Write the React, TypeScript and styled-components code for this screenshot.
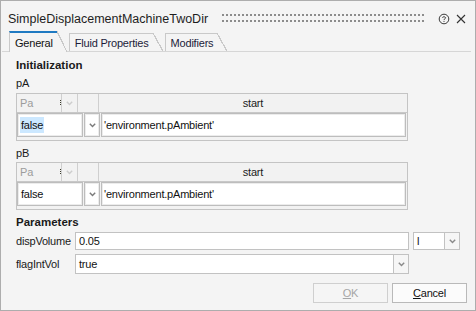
import React from 'react';
import styled, {createGlobalStyle} from 'styled-components';

const GlobalStyle = createGlobalStyle`
  html, body {
    margin: 0;
    padding: 0;
    background: #f4f4f4;
  }
  body {
    font-family: "Liberation Sans", Arial, sans-serif;
    font-size: 11px;
    letter-spacing: -0.2px;
    color: #1a1a1a;
  }
  * {
    box-sizing: border-box;
  }
`;

const Window = styled.div`
  width: 476px;
  height: 311px;
  border: 1px solid #adadad;
  background: #f4f4f4;
  display: flex;
  flex-direction: column;
  overflow: hidden;
`;

const TitleBar = styled.div`
  height: 30px;
  flex: none;
  display: flex;
  align-items: center;
  padding: 5px 8px 0 7px;
`;

const Title = styled.span`
  font-size: 12.5px;
  letter-spacing: 0;
  color: #1e1e1e;
  white-space: nowrap;
`;

const Grip = styled.svg`
  flex: 1;
  height: 9px;
  margin: 0 8px 0 14px;
`;

const IconButton = styled.span`
  width: 12px;
  height: 12px;
  display: flex;
  align-items: center;
  justify-content: center;
  margin-left: 5px;
  color: #333;
`;

const TabStrip = styled.div`
  height: 21px;
  flex: none;
  display: flex;
  align-items: flex-end;
  margin: 0 4px 0 1px;
  padding-left: 7px;
  border-bottom: 1px solid #d6d6d6;
`;

const Tab = styled.div<{$active?: boolean}>`
  position: relative;
  z-index: ${p => (p.$active ? 1 : 0)};
  height: ${p => (p.$active ? 21 : 18)}px;
  margin-bottom: ${p => (p.$active ? -1 : 0)}px;
  margin-right: 12px;
  padding: 0 4px 0 5px;
  display: flex;
  align-items: center;
  background: #f4f4f4;
  border-left: 1px solid #c9c9c9;
  border-top: ${p => (p.$active ? '2px solid #1f7ac2' : '1px solid #c9c9c9')};
  color: ${p => (p.$active ? '#111' : '#1c1c3a')};
  white-space: nowrap;

  &::after {
    content: '';
    position: absolute;
    top: ${p => (p.$active ? -2 : -1)}px;
    bottom: 0;
    right: -10px;
    width: 10px;
    background: linear-gradient(
      to top right,
      #f4f4f4 calc(50% - 0.7px),
      #c9c9c9 calc(50% - 0.7px),
      #c9c9c9 calc(50% + 0.5px),
      transparent calc(50% + 0.5px)
    );
  }
`;

const Panel = styled.div`
  flex: 1;
  display: flex;
  flex-direction: column;
  padding: 0 8px 0 15px;
`;

const SectionTitle = styled.div<{$top: number}>`
  height: 16px;
  line-height: 16px;
  margin-top: ${p => p.$top}px;
  font-weight: bold;
  font-size: 11.5px;
  letter-spacing: 0;
  color: #1a1a1a;
`;

const FieldLabel = styled.div<{$top: number}>`
  height: 16px;
  line-height: 16px;
  margin-top: ${p => p.$top}px;
`;

const Grid = styled.div<{$top: number}>`
  width: 392px;
  height: 48px;
  margin-top: ${p => p.$top}px;
  border: 1px solid #c4c4c4;
  background: #f2f2f2;
  display: flex;
  flex-direction: column;
`;

const HeaderRow = styled.div`
  height: 19px;
  display: flex;
  border-bottom: 1px solid #c8c8c8;
`;

const HeaderCell = styled.div<{$width?: number; $muted?: boolean; $center?: boolean}>`
  position: relative;
  width: ${p => (p.$width ? `${p.$width}px` : 'auto')};
  flex: ${p => (p.$width ? 'none' : 1)};
  display: flex;
  align-items: center;
  justify-content: ${p => (p.$center ? 'center' : 'flex-start')};
  padding-left: ${p => (p.$center ? 0 : 3)}px;
  border-right: 1px solid #cfcfcf;
  color: ${p => (p.$muted ? '#9c9c9c' : '#1a1a1a')};

  &:last-child {
    border-right: none;
  }
`;

const Splitter = styled.span`
  position: absolute;
  right: 0;
  top: 6px;
  width: 1px;
  height: 5px;
  border-left: 1px dotted #3a3a2a;
`;

const DataRow = styled.div`
  height: 24px;
  display: flex;
  gap: 1px;
  padding-right: 1px;
`;

const DataCell = styled.div<{$width?: number; $center?: boolean}>`
  width: ${p => (p.$width ? `${p.$width}px` : 'auto')};
  flex: ${p => (p.$width ? 'none' : 1)};
  display: flex;
  align-items: center;
  justify-content: ${p => (p.$center ? 'center' : 'flex-start')};
  padding-left: ${p => (p.$center ? 0 : 2)}px;
  background: #fff;
  border: 1px solid #bdbdbd;
  box-shadow: inset 0 0 0 1px #ececec;
  color: #111;
  white-space: nowrap;
`;

const Selected = styled.span<{$on?: boolean}>`
  background: ${p => (p.$on ? '#cce8ff' : 'transparent')};
  padding: 2px 1px;
`;

const ParamRow = styled.div<{$top: number; $height: number}>`
  height: ${p => p.$height}px;
  margin-top: ${p => p.$top}px;
  display: flex;
  align-items: stretch;
`;

const ParamLabel = styled.div`
  width: 59px;
  display: flex;
  align-items: center;
  white-space: nowrap;
`;

const TextBox = styled.div<{$width: number}>`
  width: ${p => p.$width}px;
  display: flex;
  align-items: center;
  padding-left: 3px;
  background: #fff;
  border: 1px solid #c2c2c2;
  color: #111;
`;

const DropButton = styled.div<{$width: number}>`
  width: ${p => p.$width}px;
  display: flex;
  align-items: center;
  justify-content: center;
  background: #f6f6f6;
  border: 1px solid #c2c2c2;
  border-left: none;
`;

const UnitBox = styled(TextBox)`
  margin-left: 4px;
`;

const Footer = styled.div`
  margin-top: 9px;
  display: flex;
  justify-content: flex-end;
  gap: 4px;
`;

const Button = styled.button`
  width: 75px;
  height: 20px;
  padding: 0;
  font-family: inherit;
  font-size: 11px;
  letter-spacing: -0.2px;
  background: #fbfbfb;
  color: #111;
  border: 1px solid #b9b9b9;
  border-radius: 0;

  &:disabled {
    background: #f5f5f5;
    color: #a6a6a6;
    border-color: #cfcfcf;
  }
`;

function Chevron({color = '#7a7a7a'}: {color?: string}) {
  return (
    <svg width="7" height="5" viewBox="0 0 7 5">
      <path d="M0.8 0.8 L3.5 3.6 L6.2 0.8" fill="none" stroke={color} strokeWidth="1.4"/>
    </svg>
  );
}

function HelpIcon() {
  return (
    <svg width="12" height="12" viewBox="0 0 12 12">
      <circle cx="6" cy="6" r="4.8" fill="none" stroke="#3a3a3a" strokeWidth="1"/>
      <path d="M4.4 4.7 C4.4 3.5 7.6 3.5 7.6 4.8 C7.6 5.8 6 5.8 6 7" fill="none" stroke="#3a3a3a" strokeWidth="1"/>
      <rect x="5.5" y="7.9" width="1" height="1" fill="#3a3a3a"/>
    </svg>
  );
}

function CloseIcon() {
  return (
    <svg width="10" height="10" viewBox="0 0 10 10">
      <path d="M1 1 L9 9 M9 1 L1 9" stroke="#333" strokeWidth="1.1"/>
    </svg>
  );
}

function GripDots() {
  return (
    <Grip>
      <defs>
        <pattern id="grip" width="4" height="6" patternUnits="userSpaceOnUse">
          <rect x="0" y="0" width="2" height="2" fill="#8c8c8c"/>
        </pattern>
      </defs>
      <rect x="0" y="0" width="100%" height="8" fill="url(#grip)"/>
    </Grip>
  );
}

function PressureGrid({top, selected}: {top: number; selected?: boolean}) {
  return (
    <Grid $top={top}>
      <HeaderRow>
        <HeaderCell $width={45} $muted>Pa<Splitter/></HeaderCell>
        <HeaderCell $width={16} $center><Chevron color="#cdcdcd"/></HeaderCell>
        <HeaderCell $width={21}/>
        <HeaderCell $center>start</HeaderCell>
      </HeaderRow>
      <DataRow>
        <DataCell $width={66}><Selected $on={selected}>false</Selected></DataCell>
        <DataCell $width={16} $center><Chevron/></DataCell>
        <DataCell>'environment.pAmbient'</DataCell>
      </DataRow>
    </Grid>
  );
}

export default function App() {
  return (
    <>
      <GlobalStyle/>
      <Window>
        <TitleBar>
          <Title>SimpleDisplacementMachineTwoDir</Title>
          <GripDots/>
          <IconButton><HelpIcon/></IconButton>
          <IconButton><CloseIcon/></IconButton>
        </TitleBar>
        <TabStrip>
          <Tab $active>General</Tab>
          <Tab>Fluid Properties</Tab>
          <Tab>Modifiers</Tab>
        </TabStrip>
        <Panel>
          <SectionTitle $top={5}>Initialization</SectionTitle>
          <FieldLabel $top={2}>pA</FieldLabel>
          <PressureGrid top={2} selected/>
          <FieldLabel $top={4}>pB</FieldLabel>
          <PressureGrid top={1}/>
          <SectionTitle $top={4}>Parameters</SectionTitle>
          <ParamRow $top={2} $height={18}>
            <ParamLabel>dispVolume</ParamLabel>
            <TextBox $width={334}>0.05</TextBox>
            <UnitBox $width={32}>l</UnitBox>
            <DropButton $width={15}><Chevron color="#8a8a8a"/></DropButton>
          </ParamRow>
          <ParamRow $top={4} $height={20}>
            <ParamLabel>flagIntVol</ParamLabel>
            <TextBox $width={319}>true</TextBox>
            <DropButton $width={15}><Chevron color="#8a8a8a"/></DropButton>
          </ParamRow>
          <Footer>
            <Button disabled><u>O</u>K</Button>
            <Button><u>C</u>ancel</Button>
          </Footer>
        </Panel>
      </Window>
    </>
  );
}
